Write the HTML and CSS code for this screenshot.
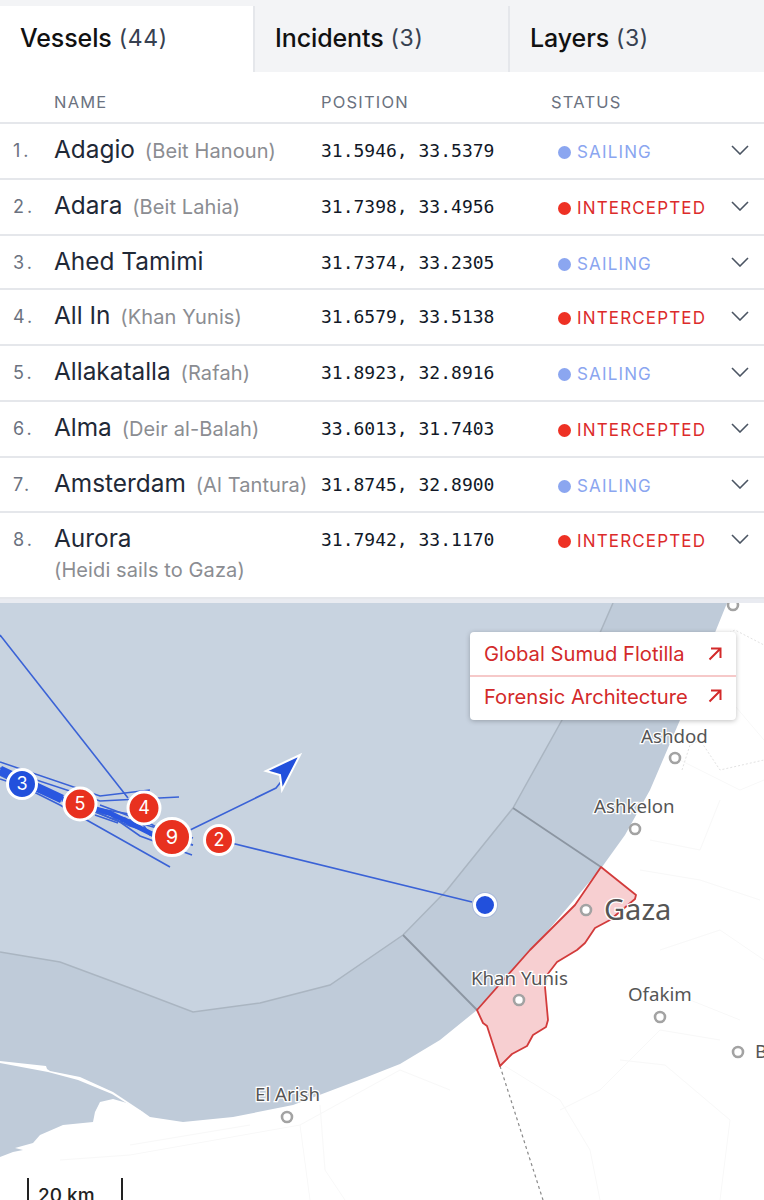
FILE: index.html
```html
<!DOCTYPE html>
<html lang="en">
<head>
<meta charset="utf-8">
<title>Vessels</title>
<link rel="stylesheet" href="styles.css">
</head>
<body>
<div class="page">
  <nav class="tabs">
    <div class="tab tab-active">Vessels <span class="count">(44)</span></div>
    <div class="tab">Incidents <span class="count">(3)</span></div>
    <div class="tab">Layers <span class="count">(3)</span></div>
  </nav>
  <div class="thead">
    <span></span><span>NAME</span><span>POSITION</span><span>STATUS</span>
  </div>
  <div class="row">
    <span class="num">1.</span>
    <div class="name">Adagio <small>(Beit Hanoun)</small></div>
    <span class="pos">31.5946, 33.5379</span>
    <div class="status sailing"><i></i><b>SAILING</b><svg class="chev" viewBox="0 0 18 10"><path d="M1 1l8 8 8-8"/></svg></div>
  </div>
  <div class="row">
    <span class="num">2.</span>
    <div class="name">Adara <small>(Beit Lahia)</small></div>
    <span class="pos">31.7398, 33.4956</span>
    <div class="status intercepted"><i></i><b>INTERCEPTED</b><svg class="chev" viewBox="0 0 18 10"><path d="M1 1l8 8 8-8"/></svg></div>
  </div>
  <div class="row row-short">
    <span class="num">3.</span>
    <div class="name">Ahed Tamimi</div>
    <span class="pos">31.7374, 33.2305</span>
    <div class="status sailing"><i></i><b>SAILING</b><svg class="chev" viewBox="0 0 18 10"><path d="M1 1l8 8 8-8"/></svg></div>
  </div>
  <div class="row">
    <span class="num">4.</span>
    <div class="name">All In <small>(Khan Yunis)</small></div>
    <span class="pos">31.6579, 33.5138</span>
    <div class="status intercepted"><i></i><b>INTERCEPTED</b><svg class="chev" viewBox="0 0 18 10"><path d="M1 1l8 8 8-8"/></svg></div>
  </div>
  <div class="row">
    <span class="num">5.</span>
    <div class="name">Allakatalla <small>(Rafah)</small></div>
    <span class="pos">31.8923, 32.8916</span>
    <div class="status sailing"><i></i><b>SAILING</b><svg class="chev" viewBox="0 0 18 10"><path d="M1 1l8 8 8-8"/></svg></div>
  </div>
  <div class="row">
    <span class="num">6.</span>
    <div class="name">Alma <small>(Deir al-Balah)</small></div>
    <span class="pos">33.6013, 31.7403</span>
    <div class="status intercepted"><i></i><b>INTERCEPTED</b><svg class="chev" viewBox="0 0 18 10"><path d="M1 1l8 8 8-8"/></svg></div>
  </div>
  <div class="row row-mid">
    <span class="num">7.</span>
    <div class="name">Amsterdam <small>(Al Tantura)</small></div>
    <span class="pos">31.8745, 32.8900</span>
    <div class="status sailing"><i></i><b>SAILING</b><svg class="chev" viewBox="0 0 18 10"><path d="M1 1l8 8 8-8"/></svg></div>
  </div>
  <div class="row row-tall">
    <span class="num">8.</span>
    <div class="name">Aurora<small class="sub-block">(Heidi sails to Gaza)</small></div>
    <span class="pos">31.7942, 33.1170</span>
    <div class="status intercepted"><i></i><b>INTERCEPTED</b><svg class="chev" viewBox="0 0 18 10"><path d="M1 1l8 8 8-8"/></svg></div>
  </div>

  <section class="map">
    <svg class="map-svg" viewBox="0 603 764 597" width="764" height="597">
      <g class="roads">
        <path d="M600 1200L590 1150 560 1100 505 1066M720 1040L660 1030 600 1090 560 1110M620 1060L665 1065 730 1120 720 1200M640 870L700 880 760 900M660 950L720 930 764 960M730 700L764 740M680 760L740 790 764 780M650 840L700 850 720 800M690 1000L740 1020"/>
        <path d="M450 1090L400 1070 300 1125 130 1155 60 1160M300 1125L310 1200M320 1105L325 1170 345 1200M250 1125L130 1145"/>
      </g>
      <g class="borders">
        <path d="M682 770L690 745 700 740 720 770 764 760M715 640L735 630 764 645"/>
      </g>
      <path class="sea" d="M727 603L712 640 700 680 680 720 650 790 625 835 602 867 540 940 477 1010 440 1040 400 1064 367 1077 293 1105 233 1117 183 1122 150 1117 143 1112 127 1103 113 1099 100 1102 95 1112 93 1122 63 1125 40 1135 33 1143 15 1148 23 1150 13 1152 0 1157 0 603Z"/>
      <path class="sandbar" d="M0 1061L46 1066 47 1069 50 1071 80 1077 113 1092 143 1112 139 1111 112 1094 78 1080 48 1072 0 1063Z"/>
      <path class="sea-light" d="M0 603L613 603 562 720 523 790 513 808 447 890 403 935 330 985 260 1003 193 1012 130 988 60 962 0 952Z"/>
      <path class="arc" d="M613 603L562 720 523 790 513 808 447 890 403 935 330 985 260 1003 193 1012 130 988 60 962 0 952"/>
      <path class="zone" d="M513 808L601 867M403 935L477 1010"/>
      <path class="dash" d="M500 1066L543 1200"/>
      <path class="gaza" d="M601 867L636 895 635 899 610 920 595 928 585 943 577 950 557 962 547 975 545 987 548 1020 546 1027 533 1035 527 1046 512 1054 500 1066 487 1026 483 1023 477 1010 530 950 575 905Z"/>

      <g class="tracks">
        <path d="M0 635L128 798"/>
        <path d="M0 762L100 796 150 790M0 768L100 801 179 797M0 772L130 826 193 845M0 775L60 805 170 867M0 779L110 815 193 838"/>
        <path d="M100 805L140 820 150 835 193 845M90 810L120 822 155 815M110 815L140 836 192 855"/>
        <path d="M95 808L135 815 165 832M95 812L125 818 160 838M95 815L118 823"/>
        <path d="M186 832L276 788 284 778"/>
        <path d="M219 840L472 902"/>
      </g>
      <path class="wake" d="M0 770L62 799"/>
      <path class="wake-thin" d="M62 799L110 813 160 838"/>
      <path class="arrow" d="M300 755L266 771 280 775 282 790Z"/>

      <g class="marker"><circle class="m-blue" cx="22" cy="784" r="14.5"/><text x="22" y="790">3</text></g>
      <g class="marker"><circle class="m-red" cx="80" cy="804" r="16"/><text x="80" y="810">5</text></g>
      <g class="marker"><circle class="m-red" cx="144" cy="808" r="16"/><text x="144" y="814">4</text></g>
      <g class="marker marker-lg"><circle class="m-red" cx="172" cy="837" r="18.5"/><text x="172" y="844">9</text></g>
      <g class="marker"><circle class="m-red" cx="219" cy="840" r="14.5"/><text x="219" y="846">2</text></g>
      <circle class="halo" cx="485" cy="905" r="13"/>
      <circle class="m-blue" cx="485" cy="905" r="10.5"/>

      <g class="dots">
        <circle cx="733" cy="605" r="5"/><circle cx="675" cy="758" r="5"/><circle cx="635" cy="829" r="5"/>
        <circle cx="586" cy="910" r="5"/><circle cx="519" cy="1000" r="5"/><circle cx="660" cy="1017" r="5"/>
        <circle cx="738" cy="1052" r="5"/><circle cx="287" cy="1117" r="5"/>
      </g>
      <g class="labels">
        <text x="641" y="743">Ashdod</text>
        <text x="594" y="813">Ashkelon</text>
        <text class="label-big" x="604" y="920">Gaza</text>
        <text x="471" y="985">Khan Yunis</text>
        <text x="628" y="1001">Ofakim</text>
        <text x="755" y="1058">B</text>
        <text x="255" y="1101">El Arish</text>
      </g>
    </svg>
    <div class="links">
      <a class="link">Global Sumud Flotilla<svg viewBox="0 0 14 14"><path d="M1.5 12.5L12.5 1.5M3 1.5h9.5V11"/></svg></a>
      <a class="link link-last">Forensic Architecture<svg viewBox="0 0 14 14"><path d="M1.5 12.5L12.5 1.5M3 1.5h9.5V11"/></svg></a>
    </div>
    <div class="scale">20 km</div>
  </section>
</div>
</body>
</html>
```
FILE: styles.css
```css
* { box-sizing: border-box; }
html, body { margin: 0; padding: 0; background: #fff; }
body { font-family: Inter, "Liberation Sans", sans-serif; color: #1f2937; }
.page { width: 764px; height: 1200px; overflow: hidden; display: flex; flex-direction: column; }

.tabs { display: grid; grid-template-columns: 253px 255px 256px; height: 72px; padding-top: 6px; background: #f3f4f6; }
.tab { display: flex; align-items: center; gap: 7px; padding: 0 20px 3px; font-size: 25px; font-weight: 500; color: #111; background: #f3f4f6; border-left: 2px solid #e5e7eb; letter-spacing: -0.1px; }
.tab-active { background: #fff; border-left: 0; }
.count { font-weight: 400; color: #374151; letter-spacing: 0.6px; font-size: 23px; }

.thead { display: grid; grid-template-columns: 41px 267px 230px 1fr; height: 52px; padding: 20px 0 0 13px; font-size: 16.5px; color: #6b7280; letter-spacing: 1.2px; border-bottom: 2px solid #e5e7eb; }

.row { display: grid; grid-template-columns: 41px 267px 230px 1fr; align-items: start; height: 56px; padding: 10px 0 0 13px; border-bottom: 2px solid #e5e7eb; }
.row-short { height: 54px; }
.row-mid { height: 55px; }
.row-tall { height: 86px; }
.num { font-size: 18px; color: #6b7280; letter-spacing: 3px; padding-top: 6px; }
.name { font-size: 24.4px; line-height: 30px; font-weight: 400; color: #1f2937; white-space: nowrap; }
.name small { font-size: 20px; color: #8b8d92; margin-left: 3px; letter-spacing: 0.1px; }
.name small.sub-block { display: block; margin: 2px 0 0; line-height: 30px; }
.pos { font-family: "DejaVu Sans Mono", "Liberation Mono", monospace; font-size: 18px; color: #111827; padding-top: 6px; }
.status { display: flex; align-items: center; height: 32px; padding: 4px 15px 0 7px; }
.status i { width: 13px; height: 13px; border-radius: 50%; margin-right: 6px; flex: none; }
.status b { font-size: 17px; font-weight: 400; letter-spacing: 1.15px; }
.sailing i { background: #8ba6f0; }
.sailing b { color: #8ba6f0; }
.intercepted i { background: #ee3124; }
.intercepted b { color: #dc2b2b; }
.chev { width: 18px; height: 10px; margin-left: auto; margin-top: -4px; fill: none; stroke: #4b5563; stroke-width: 1.6; }

.map { position: relative; flex: 1; border-top: 4px solid #e9ebf1; background: #fff; }
.map-svg { display: block; }
.roads { fill: none; stroke: #f8f8f8; stroke-width: 1; }
.borders { fill: none; stroke: #e2e2e2; stroke-width: 1; stroke-dasharray: 2 2; }
.sea { fill: #bfcbd9; }
.sea-light { fill: #c8d3e0; }
.sandbar { fill: #fff; }
.arc { fill: none; stroke: #aab5c1; stroke-width: 1.5; }
.zone { fill: none; stroke: #8c96a2; stroke-width: 1.8; }
.dash { fill: none; stroke: #8a8a8a; stroke-width: 1.2; stroke-dasharray: 3 3; }
.gaza { fill: #f7cfd1; stroke: #d23b3b; stroke-width: 1.8; stroke-linejoin: round; }
.tracks { fill: none; stroke: #3a62d6; stroke-width: 1.6; }
.wake { fill: none; stroke: #2a57e0; stroke-width: 9; }
.wake-thin { fill: none; stroke: #2a57e0; stroke-width: 5; }
.arrow { fill: #2250dc; stroke: #fff; stroke-width: 2; stroke-linejoin: miter; }
.m-blue { fill: #2250dc; stroke: #fff; stroke-width: 3; }
.m-red { fill: #e8311f; stroke: #fff; stroke-width: 3; }
.marker text { font-family: Inter, "Liberation Sans", sans-serif; font-size: 18px; fill: #fff; text-anchor: middle; }
.marker-lg text { font-size: 20px; }
.halo { fill: rgba(34, 80, 220, 0.14); }
.dots circle { fill: #fff; stroke: #a3a3a3; stroke-width: 2.6; }
.labels text { font-family: "Noto Sans", "Open Sans", sans-serif; font-size: 18.7px; fill: #555; stroke: #fff; stroke-width: 2.5; paint-order: stroke; }
.labels .label-big { font-size: 29px; }

.links { position: absolute; left: 470px; top: 29px; width: 266px; height: 88px; background: #fff; border-radius: 4px; box-shadow: 0 1px 5px rgba(0, 0, 0, 0.25); display: flex; flex-direction: column; }
.link { height: 45px; display: flex; align-items: center; justify-content: space-between; padding: 0 14px; font-size: 20.2px; color: #d32a2a; white-space: nowrap; border-bottom: 2px solid #f6c9c9; }
.link-last { height: 43px; padding-bottom: 5px; border-bottom: 0; }
.link svg { width: 14px; height: 14px; fill: none; stroke: #d32a2a; stroke-width: 2; }

.scale { position: absolute; left: 27px; top: 575px; width: 96px; height: 30px; padding: 7px 0 0 9px; border-left: 2px solid #222; border-right: 2px solid #222; font-size: 19px; font-weight: 500; color: #222; line-height: 22px; }
```
